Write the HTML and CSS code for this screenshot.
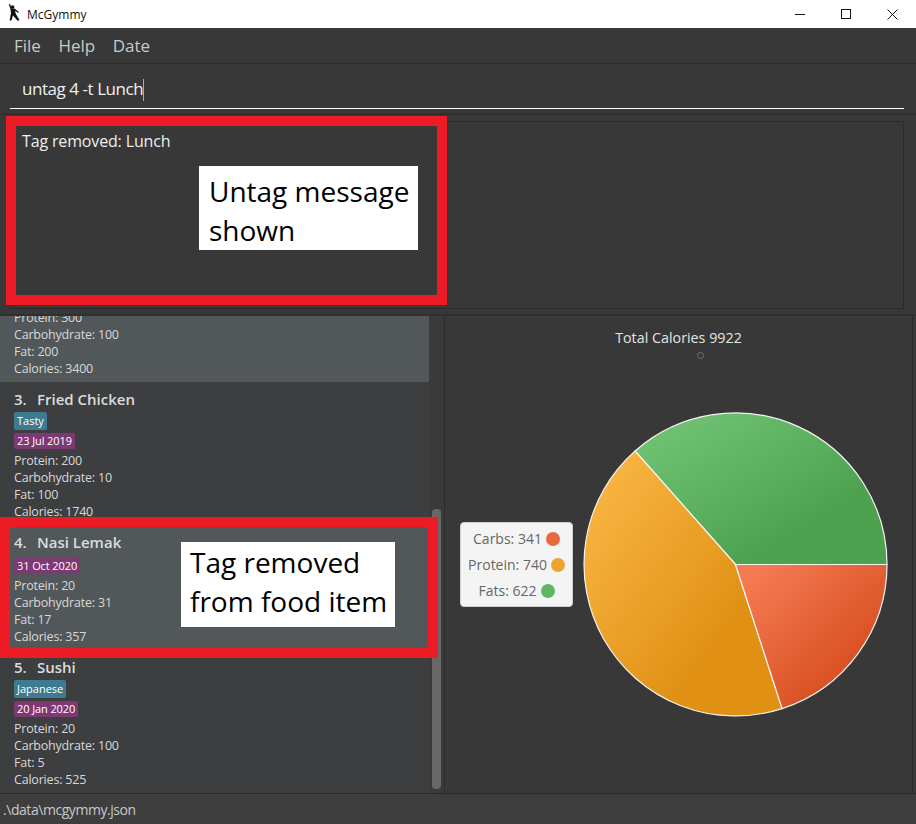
FILE: index.html
```html
<!DOCTYPE html>
<html lang="en">
<head>
  <meta charset="UTF-8">
  <title>McGymmy</title>
  <link rel="stylesheet" href="styles.css">
</head>
<body>
  <div id="window">
    <div id="title-bar">
      <svg class="app-icon" width="12" height="17" viewBox="0 0 12 17">
        <circle cx="4.6" cy="3" r="1.8" fill="#111"/>
        <path d="M0.8 0.2 L2.4 5 L3 9 L1.6 16.6 L3.4 16.6 L5 11.6 L9.6 16.8 L11.6 16.2 L7.6 9.4 L7.2 6.4 L10 9 L10.8 8 L6.6 4.4 L3.8 4.6 L2 0 Z" fill="#111"/>
      </svg>
      <span class="app-name">McGymmy</span>
      <div class="win-buttons">
        <svg width="11" height="11" viewBox="0 0 11 11"><path d="M0 5.5 H10" stroke="#111" fill="none"/></svg>
        <svg width="11" height="11" viewBox="0 0 11 11"><rect x="0.5" y="0.5" width="9" height="9" stroke="#111" fill="none"/></svg>
        <svg width="11" height="11" viewBox="0 0 11 11"><path d="M0.5 0.5 L10.5 10.5 M10.5 0.5 L0.5 10.5" stroke="#111" fill="none"/></svg>
      </div>
    </div>

    <div id="menu-bar">
      <span>File</span>
      <span>Help</span>
      <span>Date</span>
    </div>

    <div id="command-box">
      <div class="command-input">untag 4 -t Lunch<span class="caret"></span></div>
    </div>

    <div id="result-pane">
      <div class="result-box">Tag removed: Lunch</div>
    </div>

    <div id="main">
      <div id="food-list">
        <div class="food-card selected first-card">
          <div class="stat">Protein: 300</div>
          <div class="stat">Carbohydrate: 100</div>
          <div class="stat">Fat: 200</div>
          <div class="stat">Calories: 3400</div>
        </div>
        <div class="food-card">
          <div class="food-name"><span class="food-num">3.</span>Fried Chicken</div>
          <div class="tags"><span class="tag">Tasty</span></div>
          <div class="date-row"><span class="date">23 Jul 2019</span></div>
          <div class="stat">Protein: 200</div>
          <div class="stat">Carbohydrate: 10</div>
          <div class="stat">Fat: 100</div>
          <div class="stat">Calories: 1740</div>
        </div>
        <div class="food-card selected">
          <div class="food-name"><span class="food-num">4.</span>Nasi Lemak</div>
          <div class="tags"></div>
          <div class="date-row"><span class="date">31 Oct 2020</span></div>
          <div class="stat">Protein: 20</div>
          <div class="stat">Carbohydrate: 31</div>
          <div class="stat">Fat: 17</div>
          <div class="stat">Calories: 357</div>
        </div>
        <div class="food-card">
          <div class="food-name"><span class="food-num">5.</span>Sushi</div>
          <div class="tags"><span class="tag">Japanese</span></div>
          <div class="date-row"><span class="date">20 Jan 2020</span></div>
          <div class="stat">Protein: 20</div>
          <div class="stat">Carbohydrate: 100</div>
          <div class="stat">Fat: 5</div>
          <div class="stat">Calories: 525</div>
        </div>
      </div>

      <div id="scroll-track"><div class="scroll-thumb"></div></div>

      <div id="chart-pane">
        <div class="chart-title">Total Calories 9922</div>
        <div class="chart-dot"></div>
        <div class="chart-row">
          <div class="legend">
            <div class="legend-row">Carbs: 341 <i class="swatch carbs"></i></div>
            <div class="legend-row">Protein: 740 <i class="swatch protein"></i></div>
            <div class="legend-row">Fats: 622 <i class="swatch fats"></i></div>
          </div>
          <svg class="pie" width="305" height="305" viewBox="-152.5 -152.5 305 305">
            <defs>
              <linearGradient id="g-fats" x1="0" y1="0" x2="1" y2="1">
                <stop offset="0.1" stop-color="#6fc273"/>
                <stop offset="0.7" stop-color="#4ea24f"/>
              </linearGradient>
              <linearGradient id="g-protein" x1="0" y1="0" x2="1" y2="1">
                <stop offset="0.1" stop-color="#f8b441"/>
                <stop offset="0.7" stop-color="#e09114"/>
              </linearGradient>
              <linearGradient id="g-carbs" x1="0" y1="0" x2="1" y2="1">
                <stop offset="0.1" stop-color="#f47a52"/>
                <stop offset="0.7" stop-color="#da5325"/>
              </linearGradient>
            </defs>
            <path d="M0 0 L151.5 0 A151.5 151.5 0 0 0 -100.4 -113.5 Z" fill="url(#g-fats)" stroke="#f4f4f4" stroke-width="1.2"/>
            <path d="M0 0 L-100.4 -113.5 A151.5 151.5 0 0 0 46.6 144.1 Z" fill="url(#g-protein)" stroke="#f4f4f4" stroke-width="1.2"/>
            <path d="M0 0 L46.6 144.1 A151.5 151.5 0 0 0 151.5 0 Z" fill="url(#g-carbs)" stroke="#f4f4f4" stroke-width="1.2"/>
          </svg>
        </div>
      </div>
    </div>

    <div id="status-bar">.\data\mcgymmy.json</div>

    <!-- red annotations drawn on top of the app -->
    <div class="callout callout-result"></div>
    <div class="note note-result">Untag message<br>shown</div>
    <div class="callout callout-food"></div>
    <div class="note note-food">Tag removed<br>from food item</div>
  </div>
</body>
</html>
```

FILE: styles.css
```css
html, body {
margin: 0;
padding: 0;
background-color: #383838;
}

#window {
position: relative;
width: 916px;
height: 824px;
display: flex;
flex-direction: column;
overflow: hidden;
font-family: "Open Sans", "Noto Sans", sans-serif;
color: #d8d8d8;
}

#title-bar {
height: 28px;
flex: none;
background-color: #fff;
display: flex;
align-items: center;
padding-left: 8px;
box-sizing: border-box;
}

.app-icon {
margin-right: 7px;
margin-bottom: 4px;
}

.app-name {
font-size: 12px;
color: #111;
}

.win-buttons {
margin-left: auto;
display: flex;
gap: 35px;
padding-right: 18px;
}

#menu-bar {
height: 35px;
flex: none;
border-bottom: 1px solid #2b2b2b;
display: flex;
align-items: center;
gap: 17.5px;
padding-left: 14px;
font-size: 17px;
color: #c8c8c8;
}

#command-box {
height: 49px;
flex: none;
padding: 0 12px 0 10px;
border-bottom: 2px solid #2f2f2f;
}

.command-input {
height: 45px;
box-sizing: border-box;
border-bottom: 1px solid #fff;
padding: 12px 0 0 12px;
font-size: 17px;
letter-spacing: -0.45px;
line-height: 26px;
color: #f0f0f0;
}

.caret {
display: inline-block;
width: 1px;
height: 22px;
background-color: #aaa;
vertical-align: middle;
}

#result-pane {
height: 201px;
flex: none;
box-sizing: border-box;
padding: 6px 12px 5px 9px;
border-bottom: 2px solid #2f2f2f;
}

.result-box {
height: 100%;
box-sizing: border-box;
border: 1px solid #2b2b2b;
padding: 7px 12px;
font-size: 16px;
letter-spacing: -0.15px;
line-height: 24px;
color: #eee;
}

#main {
flex: 1;
display: flex;
min-height: 0;
}

#food-list {
width: 429px;
flex: none;
background-color: #3c3e40;
overflow: hidden;
}

.food-card {
padding: 7px 14px 5px;
}

.first-card {
padding-top: 0;
margin-top: -7px;
}

.selected {
background-color: #52575a;
}

.food-name {
height: 20px;
line-height: 20px;
font-size: 15px;
font-weight: 600;
color: #dcdcdc;
}

.food-num {
display: inline-block;
width: 23px;
}

.tags {
margin-top: 3px;
padding-bottom: 3px;
display: flex;
}

.tag, .date {
display: block;
border-radius: 2px;
padding: 0 3px;
font-size: 11px;
color: #fff;
}

.tag {
height: 18px;
line-height: 18px;
background-color: #3e7b91;
}

.date-row {
display: flex;
margin-bottom: 3px;
}

.date {
height: 16px;
line-height: 16px;
letter-spacing: -0.1px;
background-color: #7e3874;
}

.stat {
height: 17px;
line-height: 17px;
font-size: 12.5px;
letter-spacing: -0.2px;
color: #d8d8d8;
}

#scroll-track {
width: 16px;
flex: none;
box-sizing: border-box;
background-color: #3a3a3a;
border-right: 1px solid #2b2b2b;
padding: 193px 3px 4px 3px;
}

.scroll-thumb {
height: 100%;
background-color: #686868;
border-radius: 4px;
}

#chart-pane {
flex: 1;
display: flex;
flex-direction: column;
align-items: center;
margin-right: 3px;
border-right: 1px solid #2b2b2b;
}

.chart-title {
margin-top: 13px;
height: 18px;
line-height: 18px;
font-size: 14.3px;
color: #e4e4e4;
}

.chart-dot {
width: 5px;
height: 5px;
margin: 5px 0 0 43px;
border: 1px solid #70737a;
border-radius: 50%;
}

.chart-row {
width: 100%;
display: flex;
align-items: center;
margin-top: 53px;
padding-left: 15px;
box-sizing: border-box;
}

.legend {
width: 113px;
height: 85px;
flex: none;
box-sizing: border-box;
background-color: #f4f4f4;
border-radius: 4px;
border: 1px solid #d0d0d0;
display: flex;
flex-direction: column;
justify-content: center;
align-items: center;
gap: 8px;
font-size: 14px;
color: #666;
margin-right: 9.5px;
}

.legend-row {
height: 18px;
line-height: 18px;
display: flex;
align-items: center;
gap: 4px;
white-space: nowrap;
}

.swatch {
width: 14px;
height: 14px;
border-radius: 50%;
}

.carbs { background-color: #e8693f; }
.protein { background-color: #eca42e; }
.fats { background-color: #5fb562; }

.pie {
flex: none;
}

#status-bar {
height: 31px;
flex: none;
box-sizing: border-box;
border-top: 1px solid #2b2b2b;
padding-left: 3px;
line-height: 32px;
font-size: 14px;
letter-spacing: -0.45px;
color: #c8c8c8;
background-color: #3e3e3e;
}

.callout {
position: absolute;
box-sizing: border-box;
border: 10px solid #ed1c24;
}

.callout-result {
left: 6px;
top: 116px;
width: 441px;
height: 189px;
}

.callout-food {
left: 0;
top: 517px;
width: 438px;
height: 141px;
}

.note {
position: absolute;
box-sizing: border-box;
background-color: #fff;
color: #000;
font-size: 28px;
line-height: 39px;
white-space: nowrap;
}

.note-result {
left: 199px;
top: 166px;
width: 219px;
height: 84px;
padding: 6px 10px 0;
}

.note-food {
left: 181px;
top: 542px;
width: 214px;
height: 85px;
padding: 1px 9px 0;
}
```
